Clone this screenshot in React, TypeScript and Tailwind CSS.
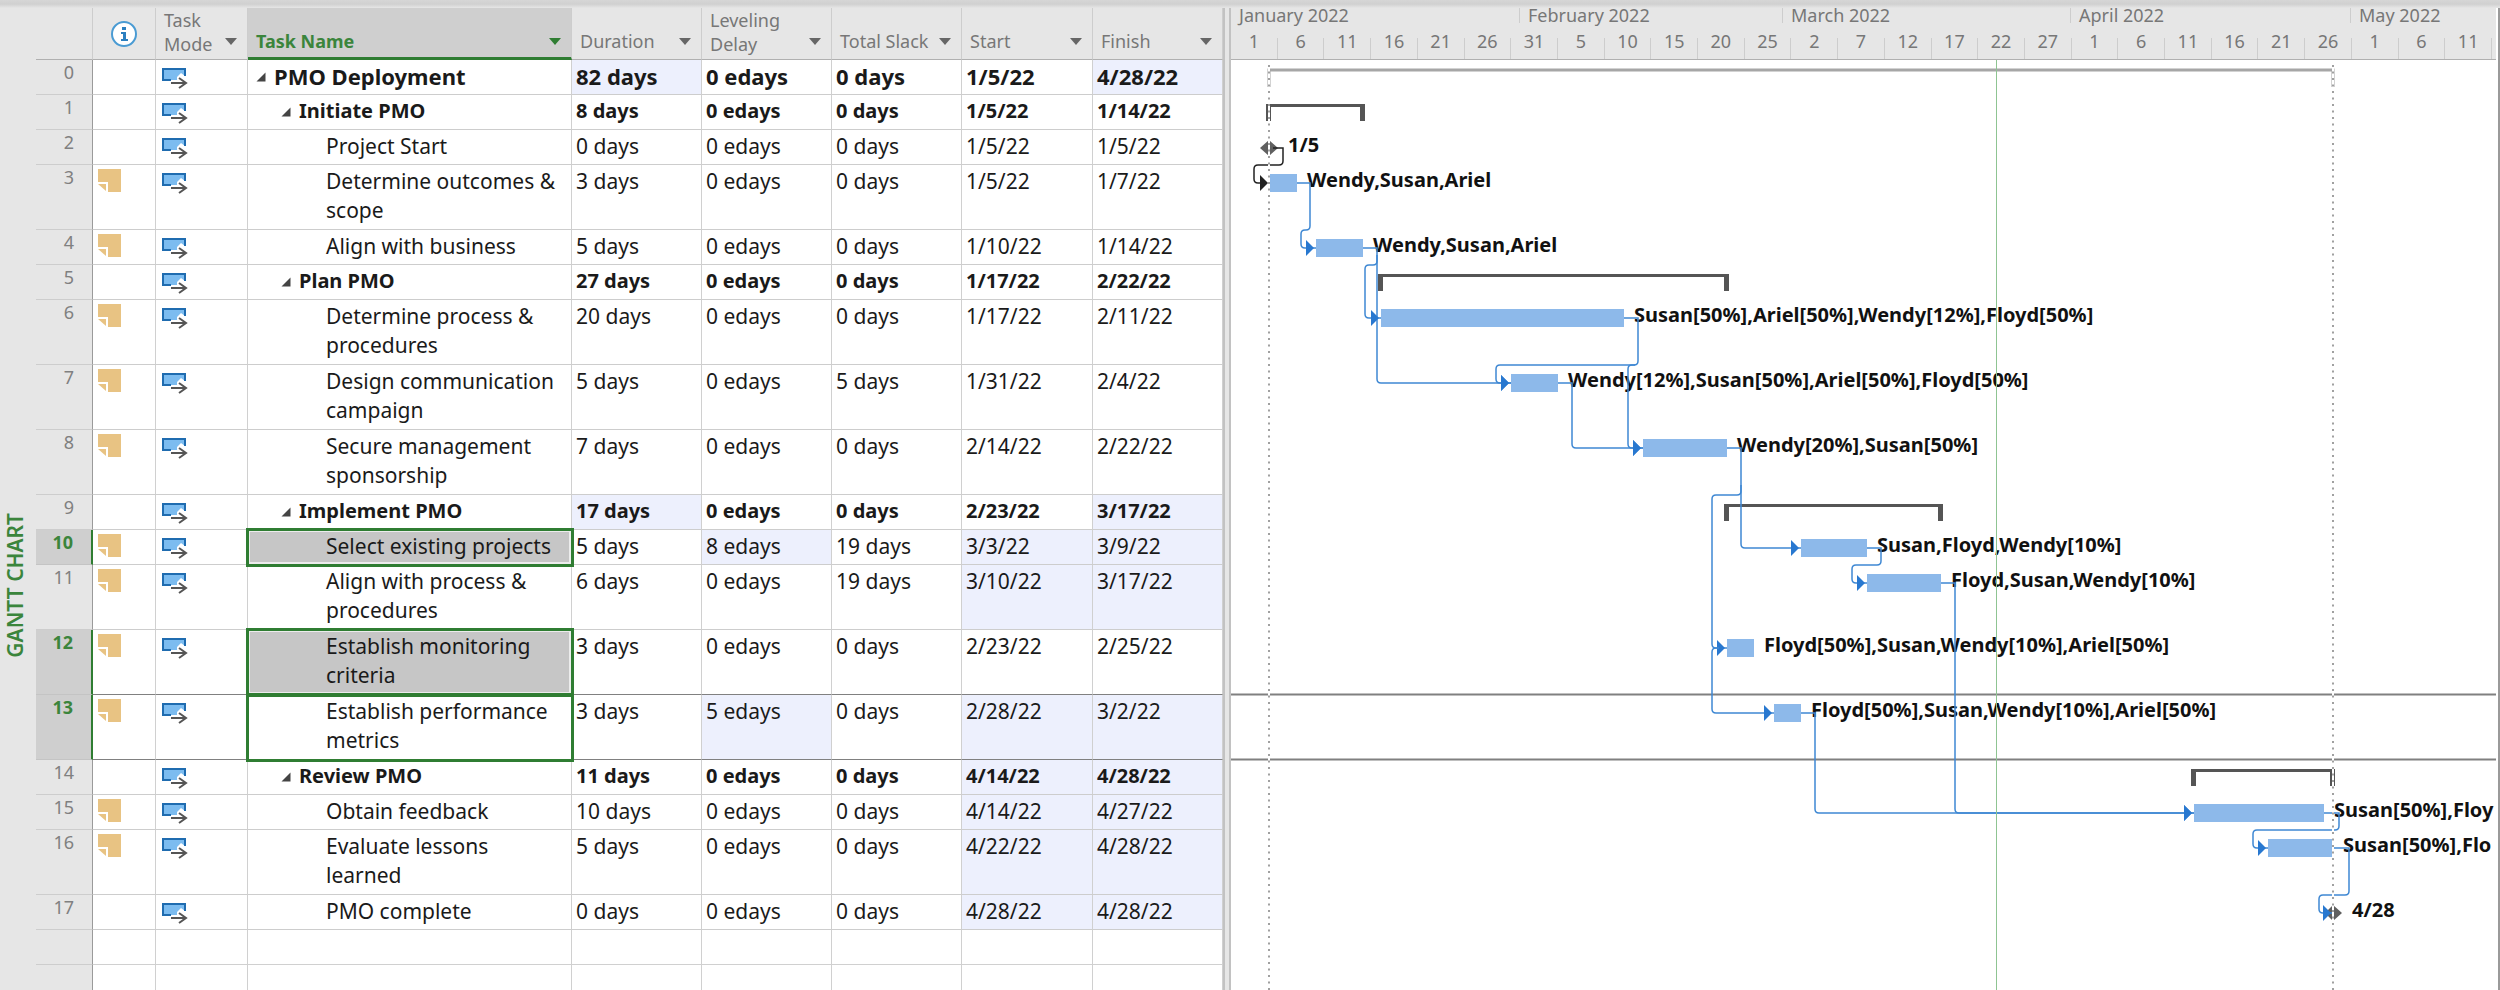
import clsx from "clsx";

type Column = "duration" | "delay" | "slack" | "start" | "finish";

type Task = {
  id: number;
  level: 0 | 1 | 2;
  name: string;
  duration: string;
  delay: string;
  slack: string;
  start: string;
  finish: string;
  note?: boolean;
  tall?: boolean;
  selected?: "range" | "active";
  changed?: Column[];
};

const tasks: Task[] = [
  { id: 0, level: 0, name: "PMO Deployment", duration: "82 days", delay: "0 edays", slack: "0 days", start: "1/5/22", finish: "4/28/22", changed: ["duration", "finish"] },
  { id: 1, level: 1, name: "Initiate PMO", duration: "8 days", delay: "0 edays", slack: "0 days", start: "1/5/22", finish: "1/14/22" },
  { id: 2, level: 2, name: "Project Start", duration: "0 days", delay: "0 edays", slack: "0 days", start: "1/5/22", finish: "1/5/22" },
  { id: 3, level: 2, name: "Determine outcomes & scope", duration: "3 days", delay: "0 edays", slack: "0 days", start: "1/5/22", finish: "1/7/22", note: true, tall: true },
  { id: 4, level: 2, name: "Align with business", duration: "5 days", delay: "0 edays", slack: "0 days", start: "1/10/22", finish: "1/14/22", note: true },
  { id: 5, level: 1, name: "Plan PMO", duration: "27 days", delay: "0 edays", slack: "0 days", start: "1/17/22", finish: "2/22/22" },
  { id: 6, level: 2, name: "Determine process & procedures", duration: "20 days", delay: "0 edays", slack: "0 days", start: "1/17/22", finish: "2/11/22", note: true, tall: true },
  { id: 7, level: 2, name: "Design communication campaign", duration: "5 days", delay: "0 edays", slack: "5 days", start: "1/31/22", finish: "2/4/22", note: true, tall: true },
  { id: 8, level: 2, name: "Secure management sponsorship", duration: "7 days", delay: "0 edays", slack: "0 days", start: "2/14/22", finish: "2/22/22", note: true, tall: true },
  { id: 9, level: 1, name: "Implement PMO", duration: "17 days", delay: "0 edays", slack: "0 days", start: "2/23/22", finish: "3/17/22", changed: ["duration", "finish"] },
  { id: 10, level: 2, name: "Select existing projects", duration: "5 days", delay: "8 edays", slack: "19 days", start: "3/3/22", finish: "3/9/22", note: true, selected: "range", changed: ["delay", "start", "finish"] },
  { id: 11, level: 2, name: "Align with process & procedures", duration: "6 days", delay: "0 edays", slack: "19 days", start: "3/10/22", finish: "3/17/22", note: true, tall: true, changed: ["start", "finish"] },
  { id: 12, level: 2, name: "Establish monitoring criteria", duration: "3 days", delay: "0 edays", slack: "0 days", start: "2/23/22", finish: "2/25/22", note: true, tall: true, selected: "range" },
  { id: 13, level: 2, name: "Establish performance metrics", duration: "3 days", delay: "5 edays", slack: "0 days", start: "2/28/22", finish: "3/2/22", note: true, tall: true, selected: "active", changed: ["delay", "start", "finish"] },
  { id: 14, level: 1, name: "Review PMO", duration: "11 days", delay: "0 edays", slack: "0 days", start: "4/14/22", finish: "4/28/22", changed: ["start", "finish"] },
  { id: 15, level: 2, name: "Obtain feedback", duration: "10 days", delay: "0 edays", slack: "0 days", start: "4/14/22", finish: "4/27/22", note: true, changed: ["start", "finish"] },
  { id: 16, level: 2, name: "Evaluate lessons learned", duration: "5 days", delay: "0 edays", slack: "0 days", start: "4/22/22", finish: "4/28/22", note: true, tall: true, changed: ["start", "finish"] },
  { id: 17, level: 2, name: "PMO complete", duration: "0 days", delay: "0 edays", slack: "0 days", start: "4/28/22", finish: "4/28/22", changed: ["start", "finish"] },
];

const columns: Column[] = ["duration", "delay", "slack", "start", "finish"];

const headers = [
  { label: "Duration" },
  { label: "Leveling Delay", wrap: true },
  { label: "Total Slack" },
  { label: "Start" },
  { label: "Finish" },
];

const months = [
  { label: "January 2022", width: "w-[289px]" },
  { label: "February 2022", width: "w-[263px]" },
  { label: "March 2022", width: "w-[288px]" },
  { label: "April 2022", width: "w-[280px]" },
  { label: "May 2022", width: "flex-1" },
];

const days = [1, 6, 11, 16, 21, 26, 31, 5, 10, 15, 20, 25, 2, 7, 12, 17, 22, 27, 1, 6, 11, 16, 21, 26, 1, 6, 11];

// Top of every row inside the chart, indexed by task id
const rowTops: number[] = [];
tasks.reduce((top, t) => {
  rowTops.push(top);
  return top + (t.tall ? 65 : 35);
}, 0);

const bars = [
  { row: 3, from: 38, to: 66 },
  { row: 4, from: 85, to: 132 },
  { row: 6, from: 150, to: 393 },
  { row: 7, from: 280, to: 327 },
  { row: 8, from: 412, to: 496 },
  { row: 10, from: 570, to: 636 },
  { row: 11, from: 636, to: 710 },
  { row: 12, from: 496, to: 523 },
  { row: 13, from: 543, to: 570 },
  { row: 15, from: 963, to: 1093 },
  { row: 16, from: 1037, to: 1102 },
];

const summaries = [
  { row: 1, from: 35, to: 134 },
  { row: 5, from: 147, to: 498 },
  { row: 9, from: 493, to: 712 },
  { row: 14, from: 960, to: 1104 },
];

const labels = [
  { row: 2, x: 57, text: "1/5" },
  { row: 3, x: 76, text: "Wendy,Susan,Ariel" },
  { row: 4, x: 142, text: "Wendy,Susan,Ariel" },
  { row: 6, x: 403, text: "Susan[50%],Ariel[50%],Wendy[12%],Floyd[50%]" },
  { row: 7, x: 337, text: "Wendy[12%],Susan[50%],Ariel[50%],Floyd[50%]" },
  { row: 8, x: 506, text: "Wendy[20%],Susan[50%]" },
  { row: 10, x: 646, text: "Susan,Floyd,Wendy[10%]" },
  { row: 11, x: 720, text: "Floyd,Susan,Wendy[10%]" },
  { row: 12, x: 533, text: "Floyd[50%],Susan,Wendy[10%],Ariel[50%]" },
  { row: 13, x: 580, text: "Floyd[50%],Susan,Wendy[10%],Ariel[50%]" },
  { row: 15, x: 1103, text: "Susan[50%],Floy" },
  { row: 16, x: 1112, text: "Susan[50%],Flo" },
  { row: 17, x: 1121, text: "4/28" },
];

type Point = [number, number];

const links: Point[][] = [
  [[66, 123], [79, 123], [79, 170], [70, 170], [70, 188], [85, 188]],
  [[132, 188], [146, 188], [146, 323], [280, 323]],
  [[146, 195], [146, 205], [134, 205], [134, 258], [150, 258]],
  [[393, 258], [407, 258], [407, 305], [265, 305], [265, 323], [280, 323]],
  [[404, 305], [397, 305], [397, 388], [412, 388]],
  [[327, 323], [341, 323], [341, 388], [412, 388]],
  [[496, 388], [510, 388], [510, 488], [570, 488]],
  [[510, 425], [510, 435], [481, 435], [481, 588], [496, 588]],
  [[488, 588], [481, 588], [481, 653], [543, 653]],
  [[636, 488], [650, 488], [650, 505], [621, 505], [621, 523], [636, 523]],
  [[710, 523], [724, 523], [724, 753], [963, 753]],
  [[570, 653], [584, 653], [584, 753], [963, 753]],
  [[1093, 753], [1108, 753], [1108, 770], [1022, 770], [1022, 788], [1037, 788]],
  [[1102, 788], [1118, 788], [1118, 835], [1088, 835], [1088, 853], [1102, 853]],
];

// Elbow connector with softened corners
const elbow = (pts: Point[]) => {
  let d = `M${pts[0][0]} ${pts[0][1]}`;
  for (let i = 1; i < pts.length - 1; i++) {
    const [px, py] = pts[i - 1];
    const [x, y] = pts[i];
    const [nx, ny] = pts[i + 1];
    // the corner that leaves a bar stays square
    const r = i === 1 && py === y && x > px ? 0 : 4;
    d += ` L${x - Math.sign(x - px) * r} ${y - Math.sign(y - py) * r}`;
    d += ` Q${x} ${y} ${x + Math.sign(nx - x) * r} ${y + Math.sign(ny - y) * r}`;
  }
  const [ex, ey] = pts[pts.length - 1];
  return `${d} L${ex} ${ey}`;
};

const arrow = (x: number, y: number) => `M${x - 10} ${y - 8} L${x - 2} ${y} L${x - 10} ${y + 8} Z`;

const Caret = ({ label, green }: { label: string; green?: boolean }) => (
  <button type="button" aria-label={`${label} filter`} className={clsx("shrink-0 pb-[3px]", green ? "text-[#2f7d32]" : "text-[#666]")}>
    <svg width="12" height="7" viewBox="0 0 12 7" className="block">
      <path d="M0 0H12L6 7Z" fill="currentColor" />
    </svg>
  </button>
);

const InfoIcon = () => (
  <svg width="28" height="28" viewBox="0 0 28 28" className="mx-auto block">
    <circle cx="14" cy="14" r="12" fill="#fff" stroke="#4a9bd3" strokeWidth="2" />
    <rect x="12" y="7" width="4" height="3" fill="#2b7fc0" />
    <path d="M11 12h5v7h2v2h-7v-2h2v-5h-2z" fill="#2b7fc0" />
  </svg>
);

const ModeIcon = () => (
  <svg width="26" height="21" viewBox="0 0 26 21" className="block">
    <path d="M1 1H23V8L19 5L15 9V12H1Z" fill="#7cbcf0" />
    <path d="M23 8V1H1V12H9" fill="none" stroke="#1f6cb0" strokeWidth="2" />
    <path d="M9 15H23M17 10L24 15L17 20" fill="none" stroke="#555" strokeWidth="2" />
  </svg>
);

const NoteIcon = () => (
  <svg width="23" height="23" viewBox="0 0 23 23" className="block">
    <path d="M0 0H23V23H10V13H0Z" fill="#e8c383" />
    <path d="M0 15H8V22Z" fill="#e8c383" />
  </svg>
);

const Collapse = () => (
  <button type="button" aria-label="Collapse" className="mr-2 mt-[10px] shrink-0">
    <svg width="10" height="10" viewBox="0 0 10 10" className="block">
      <path d="M9.5 0.5V9.5H0.5Z" fill="#444" />
    </svg>
  </button>
);

const TaskRow = ({ task }: { task: Task }) => {
  const ruled = task.id === 12 || task.id === 13;
  const line = clsx("border-b", ruled ? "border-b-[#808080]" : "border-b-[#cdcdcd]");
  return (
    <tr className={task.tall ? "h-[65px]" : "h-[35px]"}>
      <th
        scope="row"
        className={clsx(
          "pr-[18px] text-right text-lg leading-6",
          task.selected
            ? "border-b border-r-2 border-b-[#c4c4c4] border-r-[#2f7d32] bg-[#cfcfcf] font-bold text-[#3b853c]"
            : "border-b border-r border-b-[#cdcdcd] border-r-[#9a9a9a] bg-[#e6e6e6] font-normal text-[#808080]",
        )}
      >
        {task.id}
      </th>
      <td className={clsx("border-r border-r-[#d0d0d0] pl-[5px] pt-1", line)}>{task.note && <NoteIcon />}</td>
      <td className={clsx("border-r border-r-[#d0d0d0] pl-[6px] pt-2", line)}>
        <ModeIcon />
      </td>
      <td
        className={clsx(
          "border-r border-r-[#d0d0d0] pt-[2px]",
          line,
          task.selected && "outline-[3px] -outline-offset-1 outline-[#2f7d32] outline-solid",
          task.selected === "range" && "bg-[#c6c6c6] shadow-[inset_0_0_0_2px_#ececec]",
        )}
      >
        <div
          className={clsx(
            "flex items-start pr-2",
            task.level === 0 && "pl-2 text-[22px] font-bold",
            task.level === 1 && "pl-[33px] text-xl font-bold",
            task.level === 2 && "pl-[78px]",
          )}
        >
          {task.level < 2 && <Collapse />}
          <span>{task.name}</span>
        </div>
      </td>
      {columns.map((c) => (
        <td
          key={c}
          className={clsx(
            "whitespace-nowrap border-r border-r-[#d0d0d0] pl-1 pt-[2px]",
            line,
            task.level === 0 && "text-[22px] font-bold",
            task.level === 1 && "text-xl font-bold",
            task.changed?.includes(c) && "bg-[#edf0fd]",
          )}
        >
          {task[c]}
        </td>
      ))}
    </tr>
  );
};

const EmptyRow = () => (
  <tr className="h-[35px]">
    <th className="border-b border-r border-b-[#cdcdcd] border-r-[#9a9a9a] bg-[#e6e6e6]" />
    {Array.from({ length: 8 }, (_, i) => (
      <td key={i} className="border-b border-r border-[#d0d0d0]" />
    ))}
  </tr>
);

const TaskTable = () => (
  <table className="w-[1187px] shrink-0 table-fixed border-separate border-spacing-0 self-start text-[21px] leading-[29px] text-[#1a1a1a] [&_tbody_td]:align-top [&_tbody_th]:align-top">
    <colgroup>
      <col className="w-[57px]" />
      <col className="w-[63px]" />
      <col className="w-[92px]" />
      <col className="w-[324px]" />
      <col className="w-[130px]" />
      <col className="w-[130px]" />
      <col className="w-[130px]" />
      <col className="w-[131px]" />
      <col className="w-[130px]" />
    </colgroup>
    <thead className="bg-[#e6e6e6] text-lg leading-6 text-[#777]">
      <tr className="h-[60px]">
        <th className="border-b border-r border-b-[#b0b0b0] border-r-[#cdcdcd]" />
        <th className="border-b border-r border-b-[#b0b0b0] border-r-[#cdcdcd] pt-2 align-middle">
          <InfoIcon />
        </th>
        <th className="border-b border-r border-b-[#b0b0b0] border-r-[#cdcdcd] pb-[3px] pl-2 pr-[10px] text-left align-bottom font-normal">
          <div className="flex items-end justify-between">
            <span className="w-[50px]">Task Mode</span>
            <span className="pb-[6px]">
              <Caret label="Task Mode" />
            </span>
          </div>
        </th>
        <th className="border-b-[3px] border-r border-b-[#2f7d32] border-r-[#cdcdcd] bg-[#cfcfcf] pb-1 pl-2 pr-[10px] text-left align-bottom font-bold text-[#3b853c]">
          <div className="flex items-end justify-between">
            <span>Task Name</span>
            <span className="pb-[3px]">
              <Caret label="Task Name" green />
            </span>
          </div>
        </th>
        {headers.map((h) => (
          <th
            key={h.label}
            className={clsx(
              "border-b border-r border-b-[#b0b0b0] border-r-[#cdcdcd] pl-2 pr-[10px] text-left align-bottom font-normal",
              h.wrap ? "pb-[3px]" : "pb-[6px]",
            )}
          >
            <div className="flex items-end justify-between">
              <span className={h.wrap ? "w-[80px]" : "whitespace-nowrap"}>{h.label}</span>
              <span className={h.wrap ? "pb-[6px]" : "pb-[3px]"}>
                <Caret label={h.label} />
              </span>
            </div>
          </th>
        ))}
      </tr>
    </thead>
    <tbody>
      {tasks.map((t) => (
        <TaskRow key={t.id} task={t} />
      ))}
      <EmptyRow />
      <EmptyRow />
    </tbody>
  </table>
);

const Timescale = () => (
  <div className="mr-[2px] h-[60px] shrink-0 overflow-hidden border-b border-[#b0b0b0] bg-[#e6e6e6] pt-2 text-lg text-[#777]">
    <div className="flex h-[15px] items-center">
      {months.map((m) => (
        <div key={m.label} className={clsx("h-full border-r border-[#cdcdcd] pl-2 leading-[15px] last:border-r-0", m.width)}>
          {m.label}
        </div>
      ))}
    </div>
    <div className="grid h-9 w-[1261px] grid-cols-[repeat(27,minmax(0,1fr))] pt-[15px]">
      {days.map((d, i) => (
        <div key={i} className="h-[21px] border-r border-[#cdcdcd] text-center leading-[6px]">
          {d}
        </div>
      ))}
    </div>
  </div>
);

const Chart = () => (
  <svg width="100%" height="100%" className="block min-h-0 flex-1">
    <path d="M0 634.5H1265M0 699.5H1265" stroke="#808080" strokeWidth="2" />
    <g className="text-xl font-bold" fill="#111">
      {labels.map((l) => (
        <text key={l.row} x={l.x} y={rowTops[l.row] + 22}>
          {l.text}
        </text>
      ))}
    </g>

    <path d="M38 27V10H1102V27" fill="none" stroke="#a6a6a6" strokeWidth="3" />
    {summaries.map((s) => {
      const y = rowTops[s.row] + 9;
      return <path key={s.row} d={`M${s.from} ${y}H${s.to}V${y + 17}H${s.to - 5}V${y + 3}H${s.from + 5}V${y + 17}H${s.from}Z`} fill="#555" />;
    })}
    {bars.map((b) => (
      <rect key={b.row} x={b.from} y={rowTops[b.row] + 9} width={b.to - b.from} height="18" fill="#8db9ea" />
    ))}
    <path d="M29 88L38 80L47 88L38 96ZM1094 853L1102 845L1111 853L1102 861Z" fill="#606060" />

    {links.map((pts, i) => {
      const [x, y] = pts[pts.length - 1];
      return (
        <g key={i}>
          <path d={elbow(pts)} fill="none" stroke="#3f88d3" strokeWidth="1.5" />
          <path d={arrow(x, y)} fill="#2878d0" />
        </g>
      );
    })}
    <path d={elbow([[42, 88], [52, 88], [52, 105], [23, 105], [23, 123], [34, 123]])} fill="none" stroke="#222" strokeWidth="1.5" />
    <path d="M29 115L37 123L29 131Z" fill="#222" />

    {/* project start, project finish and today */}
    <path d="M38 5V930M1102 5V930" stroke="#fff" strokeWidth="2" />
    <path d="M38 5V1200M1102 5V1200" stroke="#a0a0a0" strokeWidth="2" strokeDasharray="2 4.5" />
    <path d="M765.5 0V1200" stroke="#8fc492" strokeWidth="1" />
  </svg>
);

export default function App() {
  return (
    <div className="relative flex h-screen w-full overflow-hidden bg-white font-['Noto_Sans','Open_Sans',sans-serif]">
      <aside className="w-9 shrink-0 bg-[#e6e6e6] pt-[513px]">
        <div className="ml-[3px] rotate-180 text-[21px] font-semibold leading-6 text-[#3b853c] [writing-mode:vertical-rl]">GANTT CHART</div>
      </aside>
      <TaskTable />
      <div className="w-2 shrink-0 border-x-2 border-[#c2c2c2] bg-[#e6e6e6]" />
      <main className="flex min-w-0 flex-1 flex-col border-r-2 border-[#9a9a9a]">
        <Timescale />
        <Chart />
      </main>
      <div className="pointer-events-none absolute inset-x-0 top-0 h-2 bg-linear-to-b from-[#d6d6d6] via-[#d0d0d0] to-[#e6e6e6]" />
    </div>
  );
}
